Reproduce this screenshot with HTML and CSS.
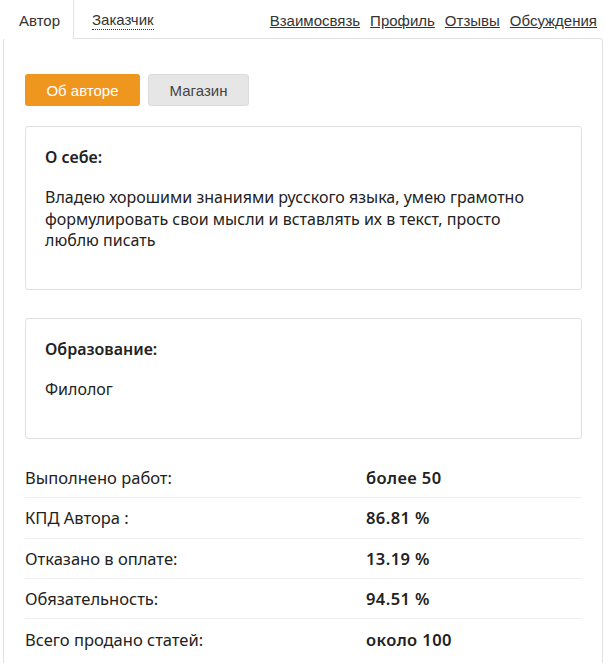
FILE: index.html
```html
<!DOCTYPE html>
<html lang="ru">
  <head>
    <meta charset="UTF-8" />
    <meta name="viewport" content="width=device-width, initial-scale=1.0" />
    <title>Профиль автора</title>
    <link rel="stylesheet" href="styles.css">
  </head>
  <body>
    <div class="tabs">
      <span class="tab active">Автор</span>
      <span class="tab"><span class="dotted">Заказчик</span></span>
      <div class="links">
        <a href="#">Взаимосвязь</a>
        <a href="#">Профиль</a>
        <a href="#">Отзывы</a>
        <a href="#">Обсуждения</a>
      </div>
    </div>
    <div class="panel">
      <div class="buttons">
        <span class="btn btn-orange">Об авторе</span>
        <span class="btn btn-gray">Магазин</span>
      </div>
      <div class="card">
        <h3>О себе:</h3>
        <p>Владею хорошими знаниями русского языка, умею грамотно формулировать свои мысли и вставлять их в текст, просто люблю писать</p>
      </div>
      <div class="card">
        <h3>Образование:</h3>
        <p>Филолог</p>
      </div>
      <ul class="stats">
        <li><span class="label">Выполнено работ:</span><span class="value">более 50</span></li>
        <li><span class="label">КПД Автора :</span><span class="value">86.81 %</span></li>
        <li><span class="label">Отказано в оплате:</span><span class="value">13.19 %</span></li>
        <li><span class="label">Обязательность:</span><span class="value">94.51 %</span></li>
        <li><span class="label">Всего продано статей:</span><span class="value">около 100</span></li>
      </ul>
    </div>
  </body>
</html>
```

FILE: styles.css
```css
* {
  margin: 0;
  padding: 0;
  box-sizing: border-box;
}
ul {
  list-style: none;
}
body {
  font-family: "Noto Sans", "Open Sans", sans-serif;
  font-size: 16px;
  color: #222;
  background: #fff;
  padding: 0 2px 0 3px;
}
.tabs {
  display: flex;
  align-items: stretch;
  height: 38px;
  font-family: "Liberation Sans Narrow", "Liberation Sans", sans-serif;
  font-size: 15px;
  color: #333;
}
.tab {
  display: flex;
  align-items: center;
  padding: 2px 16px 0;
}
.tab.active {
  width: 71px;
  background: #fff;
  border-right: 1px solid #e2e2e2;
  margin-bottom: -1px;
  position: relative;
  z-index: 1;
}
.tab .dotted {
  border-bottom: 1px dotted #333;
  line-height: 18px;
  margin-left: 2px;
}
.links {
  margin-left: auto;
  display: flex;
  align-items: center;
  gap: 10px;
  padding: 2px 6px 0 0;
}
.links a {
  color: #333;
  text-decoration: underline;
}
.panel {
  border: 1px solid #e2e2e2;
  border-radius: 0 4px 0 0;
  border-bottom: none;
  padding: 35px 20px 40px 21px;
}
.buttons {
  display: flex;
  gap: 8px;
  margin-bottom: 20px;
}
.btn {
  display: inline-flex;
  align-items: center;
  justify-content: center;
  height: 32px;
  border-radius: 3px;
  font-family: "Liberation Sans Narrow", "Liberation Sans", sans-serif;
  font-size: 15px;
}
.btn-orange {
  width: 115px;
  background: #ef961f;
  color: #fff;
}
.btn-gray {
  width: 101px;
  background: #e6e6e6;
  border: 1px solid #dcdcdc;
  color: #444;
}
.card {
  border: 1px solid #e0e0e0;
  border-radius: 3px;
  padding: 19px 19px 37px;
  margin-bottom: 28.5px;
}
.card h3 {
  font-size: 16px;
  font-weight: 600;
  line-height: 22px;
  margin-bottom: 19px;
}
.card p {
  max-width: 495px;
  line-height: 21.5px;
}
.stats {
  margin-top: -9px;
}
.stats li {
  display: flex;
  align-items: center;
  height: 40.3px;
  border-bottom: 1px solid #eee;
  font-size: 16.5px;
}
.stats li:last-child {
  border-bottom: none;
}
.label {
  width: 341px;
}
.value {
  font-weight: 600;
  letter-spacing: 0.4px;
}
```
